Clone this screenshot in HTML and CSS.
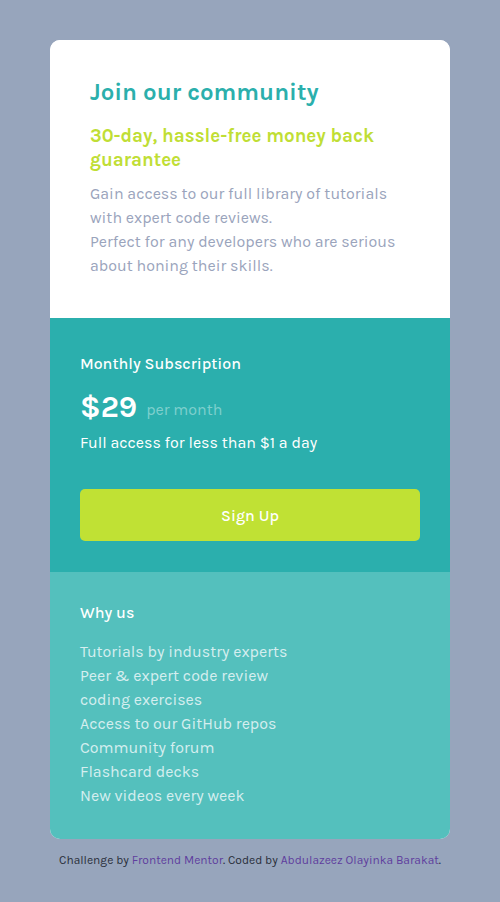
FILE: index.html
```html
<!DOCTYPE html>
<html lang="en">
<head>
<meta charset="utf-8">
<title>Single price grid</title>
<link rel="stylesheet" href="styles.css">
</head>
<body>
<main class="card">
  <section class="intro">
    <h1 class="title">Join our community</h1>
    <h2 class="subtitle">30-day, hassle-free money back guarantee</h2>
    <p class="desc">Gain access to our full library of tutorials with expert code reviews.<br>Perfect for any developers who are serious about honing their skills.</p>
  </section>
  <section class="pricing">
    <h3 class="heading">Monthly Subscription</h3>
    <p class="price"><span class="amount">$29</span><span class="per">per month</span></p>
    <p class="access">Full access for less than $1 a day</p>
    <button class="signup">Sign Up</button>
  </section>
  <section class="why">
    <h3 class="heading">Why us</h3>
    <ul class="list">
      <li>Tutorials by industry experts</li>
      <li>Peer &amp; expert code review</li>
      <li>coding exercises</li>
      <li>Access to our GitHub repos</li>
      <li>Community forum</li>
      <li>Flashcard decks</li>
      <li>New videos every week</li>
    </ul>
  </section>
</main>
<footer class="attribution">Challenge by <a href="#">Frontend Mentor</a>. Coded by <a href="#">Abdulazeez Olayinka Barakat</a>.</footer>
</body>
</html>
```
FILE: styles.css
```css
* { box-sizing: border-box; }
html, body { margin: 0; padding: 0; }
body {
  background: #97a5bc;
  font-family: "Karla", "Lato", "Liberation Sans", sans-serif;
  font-size: 16px;
  padding: 40px 50px 0;
}
.card {
  width: 400px;
  border-radius: 10px;
  overflow: hidden;
  background: #fff;
}
.intro { padding: 40px 40px 40px; background: #fff; }
.title {
  margin: 0;
  font-size: 24px;
  line-height: 24px;
  color: #2bafac;
  font-weight: 700;
}
.subtitle {
  margin: 20px 0 0;
  font-size: 18.8px;
  line-height: 24px;
  color: #c0de35;
  font-weight: 700;
}
.desc {
  margin: 10px 0 0;
  font-size: 16px;
  line-height: 24px;
  color: #9aa4bc;
}
.pricing { background: #2bafad; padding: 36px 30px 31px; color: #fff; }
.heading { margin: 0; font-size: 16px; line-height: 20px; font-weight: 500; color: #fff; }
.price { margin: 17px 0 0; display: flex; align-items: center; gap: 9px; height: 32px; }
.amount { font-size: 30px; font-weight: 700; line-height: 32px; }
.per { font-size: 16px; color: #7fcfcd; padding-top: 4px; }
.access { margin: 8px 0 0; font-size: 16px; line-height: 24px; }
.signup {
  display: block;
  width: 100%;
  margin-top: 34px;
  height: 52px;
  border: none;
  border-radius: 5px;
  background: #c0e134;
  color: #fff;
  font-family: inherit;
  font-size: 16px;
  font-weight: 500;
}
.why { background: #54c0bd; padding: 31px 30px 31px; }
.list { list-style: none; margin: 17px 0 0; padding: 0; color: #d5eeef; line-height: 24px; }
.attribution {
  text-align: center;
  font-size: 12px;
  color: #2a2f3a;
  padding-top: 14px;
  width: 400px;
}
.attribution a { color: #5f3e9e; text-decoration: none; }
```
